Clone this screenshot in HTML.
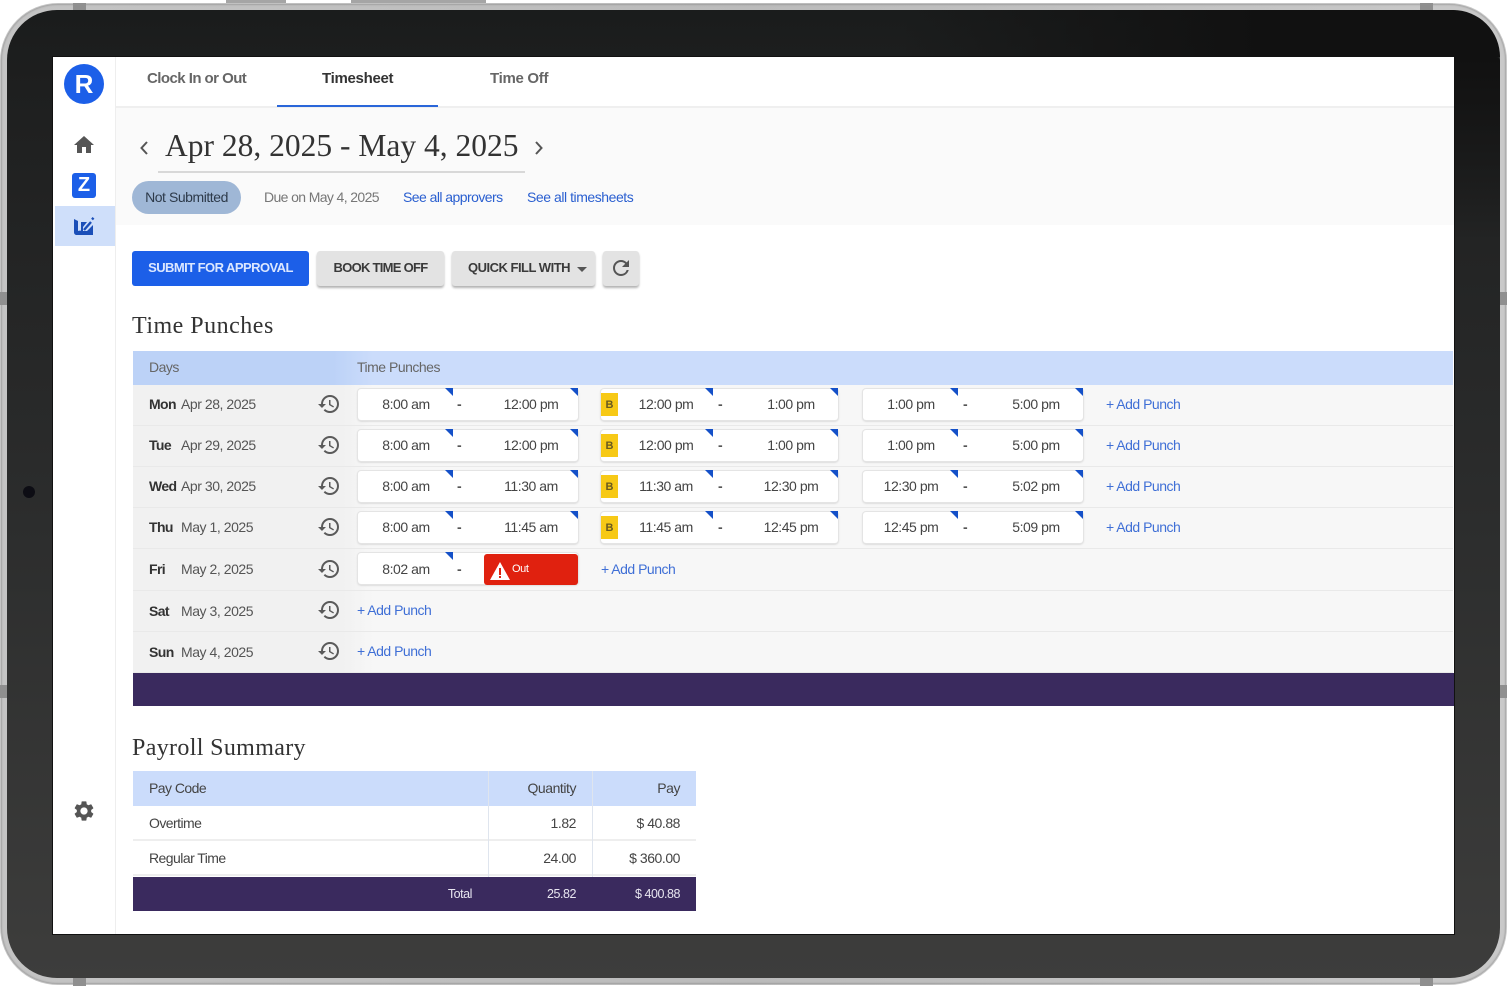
<!DOCTYPE html>
<html><head><meta charset="utf-8"><style>
html,body{margin:0;padding:0;background:#fff}
body{width:1507px;height:987px;position:relative;overflow:hidden;font-family:"Liberation Sans",sans-serif;font-size:14px;letter-spacing:-.42px;color:#444;filter:blur(.3px)}
div,span,a{position:absolute;white-space:nowrap}
svg{position:absolute}
.serif{font-family:"Liberation Serif",serif;letter-spacing:0;color:#333}
.tab{top:69px;font-size:15px;line-height:20px;color:#666;font-weight:bold;letter-spacing:-.55px}
.lnk{color:#2a5fd0;font-size:14px;line-height:18px;letter-spacing:-.5px}
.btn{top:251px;height:35px;line-height:34px;background:#e3e3e3;border-radius:3px;box-shadow:0 2px 2px rgba(0,0,0,.3);text-align:center;font-weight:bold;font-size:13px;letter-spacing:-.5px;color:#3a3a3a}
.row{left:133px;width:1320px;height:41px;background:linear-gradient(90deg,#f1f1f1 0,#f1f1f1 210px,#f7f7f7 240px,#f7f7f7 100%);border-bottom:1px solid #e9e9e9;box-sizing:border-box}
.day{left:16px;top:10px;font-weight:bold;color:#333;line-height:18px;letter-spacing:-.6px}
.dt{left:48px;top:10px;line-height:18px;color:#555;letter-spacing:-.45px}
.h{left:184px;top:7px;width:24px;height:24px;fill:#5a5a5a}
.cell{top:4px;height:31px;background:#fff;border-radius:3px;box-shadow:0 0 0 1px #e4e4e4,0 1px 2px #bbb}
.t{top:6px;width:100px;margin-left:-50px;text-align:center;line-height:18px;color:#444;letter-spacing:-.45px}
.d{top:6px;line-height:18px;color:#555;font-weight:bold}
.tri{top:-1px;width:0;height:0;border-top:8px solid #1450c8;border-left:8px solid transparent}
.b{top:4px;left:0;width:17px;height:23px;background:#f7c916;text-align:center;font-size:11px;line-height:24px;font-weight:bold;color:#6a5a20;letter-spacing:0}
.add{color:#3f6fd6;line-height:18px;top:10px;letter-spacing:-.5px}
.hd{color:#666;line-height:18px;letter-spacing:-.5px}
.pay{left:133px;width:563px;height:35px;background:#fff;border-bottom:2px solid #eee;box-sizing:border-box}
.pc{line-height:18px;color:#444;top:8px;letter-spacing:-.45px}
.r{text-align:right}
</style></head><body>
<svg width="0" height="0" style="position:absolute"><defs><symbol id="hist" viewBox="0 0 24 24"><path d="M13 3a9 9 0 0 0-9 9H1l3.89 3.89.07.14L9 12H6c0-3.87 3.13-7 7-7s7 3.13 7 7-3.13 7-7 7c-1.93 0-3.68-.79-4.94-2.06l-1.42 1.42A8.954 8.954 0 0 0 13 21a9 9 0 0 0 0-18zm-1 5v5l4.28 2.54.72-1.21-3.5-2.08V8H12z"/></symbol></defs></svg>

<div style="left:226px;top:0;width:60px;height:4px;background:#a5a5a5"></div>
<div style="left:351px;top:0;width:135px;height:4px;background:#a5a5a5"></div>
<div style="left:0;top:3px;width:1507px;height:982px;border-radius:58px;background:linear-gradient(90deg,#c4c4c4,#bbb 50%,#c9c9c9)"></div>
<div style="left:1px;top:4px;width:1505px;height:980px;border-radius:57px;box-shadow:inset 0 0 2px #777"></div>
<div style="left:7px;top:10px;width:1493px;height:968px;border-radius:50px;background:linear-gradient(180deg,#1a1c1c 0,#1e1f1f 8%,#2b2c2c 50%,#3d3d3c 100%)"></div>
<div style="left:900px;top:10px;width:600px;height:47px;border-radius:0 50px 0 0;background:linear-gradient(90deg,rgba(17,17,17,0) 0,#111 60%,#111 100%)"></div>
<div style="left:1454px;top:57px;width:46px;height:183px;border-radius:0 4px 0 0;background:linear-gradient(180deg,#111 0,rgba(17,17,17,0) 100%)"></div>
<div style="left:73px;top:3px;width:13px;height:7px;background:#8f8f8f"></div>
<div style="left:1420px;top:3px;width:13px;height:7px;background:#8f8f8f"></div>
<div style="left:73px;top:978px;width:13px;height:8px;background:#8f8f8f"></div>
<div style="left:1420px;top:978px;width:13px;height:8px;background:#8f8f8f"></div>
<div style="left:0;top:292px;width:7px;height:13px;background:#8f8f8f"></div>
<div style="left:1500px;top:292px;width:7px;height:13px;background:#8f8f8f"></div>
<div style="left:0;top:685px;width:7px;height:13px;background:#8f8f8f"></div>
<div style="left:1500px;top:685px;width:7px;height:13px;background:#8f8f8f"></div>
<div style="left:23px;top:486px;width:12px;height:12px;border-radius:50%;background:#0d0d14"></div>

<div id="screen" style="left:53px;top:57px;width:1401px;height:877px;background:#fff;overflow:hidden;box-shadow:0 0 0 1px #111"></div>

<div style="left:53px;top:57px;width:62px;height:877px;background:#fff;border-right:1px solid #eee"></div>
<div style="left:64px;top:64px;width:40px;height:40px;border-radius:50%;background:#1c5fe8;color:#fff;font-size:26px;font-weight:bold;line-height:41px;text-align:center;letter-spacing:0">R</div>
<svg style="left:72px;top:133px" width="24" height="24" viewBox="0 0 24 24" fill="#555"><path d="M10 20v-6h4v6h5v-8h3L12 3 2 12h3v8z"/></svg>
<div style="left:72px;top:173px;width:24px;height:25px;border-radius:3px;background:#1c5fe8;color:#fff;font-weight:bold;font-size:20px;line-height:25px;text-align:center;letter-spacing:0">Z</div>
<div style="left:55px;top:206px;width:60px;height:40px;background:#cfdffa"></div>
<svg style="left:73px;top:215px" width="23" height="22" viewBox="0 0 23 22"><path d="M1 4l4 2v10c1-.5 2-.5 3-.2V7h6l-4 5v4h4l6-6v10H4c-2 0-3-1-3-3z" fill="#1b4fb8"/><path d="M11 15l7-8" stroke="#1b4fb8" stroke-width="2.4" fill="none"/><path d="M19 4.5l1.5-1.7" stroke="#1b4fb8" stroke-width="2.4" fill="none"/></svg>
<svg style="left:72px;top:799px" width="24" height="24" viewBox="0 0 24 24" fill="#555"><path d="M19.14 12.94c.04-.3.06-.61.06-.94 0-.32-.02-.64-.07-.94l2.03-1.58a.49.49 0 0 0 .12-.61l-1.92-3.32a.488.488 0 0 0-.59-.22l-2.39.96c-.5-.38-1.03-.7-1.62-.94l-.36-2.54a.484.484 0 0 0-.48-.41h-3.84c-.24 0-.43.17-.47.41l-.36 2.54c-.59.24-1.13.57-1.62.94l-2.39-.96c-.22-.08-.47 0-.59.22L2.74 8.87c-.12.21-.08.47.12.61l2.03 1.58c-.05.3-.09.63-.09.94s.02.64.07.94l-2.03 1.58a.49.49 0 0 0-.12.61l1.92 3.32c.12.22.37.29.59.22l2.39-.96c.5.38 1.03.7 1.62.94l.36 2.54c.05.24.24.41.48.41h3.84c.24 0 .44-.17.47-.41l.36-2.54c.59-.24 1.13-.56 1.62-.94l2.39.96c.22.08.47 0 .59-.22l1.92-3.32c.12-.22.07-.47-.12-.61l-2.01-1.58zM12 15.6c-1.98 0-3.6-1.62-3.6-3.6s1.62-3.6 3.6-3.6 3.6 1.62 3.6 3.6-1.62 3.6-3.6 3.6z"/></svg>

<div style="left:116px;top:106px;width:1338px;height:2px;background:#efefef"></div>
<div class="tab" style="left:147px">Clock In or Out</div>
<div class="tab" style="left:322px;color:#333;letter-spacing:-.3px">Timesheet</div>
<div class="tab" style="left:490px;letter-spacing:-.3px">Time Off</div>
<div style="left:277px;top:105px;width:161px;height:2px;background:#2a66d9"></div>

<div style="left:116px;top:108px;width:1338px;height:117px;background:#fafafa"></div>
<svg style="left:138px;top:140px" width="12" height="16" viewBox="0 0 12 16" fill="none" stroke="#555" stroke-width="2"><path d="M9 2L3.5 8 9 14"/></svg>
<svg style="left:533px;top:140px" width="12" height="16" viewBox="0 0 12 16" fill="none" stroke="#555" stroke-width="2"><path d="M3 2l5.5 6L3 14"/></svg>
<div class="serif" style="left:165px;top:126px;font-size:31.5px;line-height:40px">Apr 28, 2025 - May 4, 2025</div>
<div style="left:158px;top:171px;width:367px;height:2px;background:#d8d8d8"></div>
<div style="left:132px;top:181px;width:109px;height:33px;border-radius:17px;background:#9fb7d6;text-align:center;line-height:33px;color:#2d3a4a;letter-spacing:-.45px">Not Submitted</div>
<div style="left:264px;top:188px;line-height:18px;color:#777;letter-spacing:-.62px">Due on May 4, 2025</div>
<div class="lnk" style="left:403px;top:188px;letter-spacing:-.55px">See all approvers</div>
<div class="lnk" style="left:527px;top:188px;letter-spacing:-.45px">See all timesheets</div>

<div class="btn" style="left:132px;width:177px;background:#1c5fe8;color:#dbe7ff;box-shadow:none;letter-spacing:-.55px">SUBMIT FOR APPROVAL</div>
<div class="btn" style="left:317px;width:127px;letter-spacing:-.72px">BOOK TIME OFF</div>
<div class="btn" style="left:452px;width:143px;text-align:left;text-indent:16px">QUICK FILL WITH</div>
<div style="left:577px;top:267px;width:0;height:0;border-left:5px solid transparent;border-right:5px solid transparent;border-top:5px solid #555"></div>
<div class="btn" style="left:603px;width:36px"></div>
<svg style="left:609px;top:256px" width="24" height="24" viewBox="0 0 24 24" fill="#555"><path d="M17.65 6.35A7.958 7.958 0 0 0 12 4c-4.42 0-7.99 3.58-7.99 8s3.57 8 7.99 8c3.73 0 6.84-2.55 7.73-6h-2.08A5.99 5.99 0 0 1 12 18c-3.31 0-6-2.69-6-6s2.69-6 6-6c1.66 0 3.14.69 4.22 1.78L13 11h7V4l-2.35 2.35z"/></svg>

<div class="serif" style="left:132px;top:311px;font-size:24px;line-height:30px;letter-spacing:.5px">Time Punches</div>
<div style="left:133px;top:351px;width:1320px;height:34px;background:linear-gradient(90deg,#bcd2f7 0,#bcd2f7 200px,#cbdcfb 240px,#cbdcfb 100%)"></div>
<div class="hd" style="left:149px;top:358px">Days</div>
<div class="hd" style="left:357px;top:358px">Time Punches</div>

<!-- Mon -->
<div class="row" style="top:385px"><div class="day">Mon</div><div class="dt">Apr 28, 2025</div><svg class="h"><use href="#hist"/></svg>
<div class="cell" style="left:225px;width:220px"><div class="t" style="left:48px">8:00 am</div><div class="d" style="left:99px">-</div><div class="t" style="left:173px">12:00 pm</div><div class="tri" style="left:87px"></div><div class="tri" style="left:212px"></div></div>
<div class="cell" style="left:468px;width:237px"><div class="b">B</div><div class="t" style="left:65px">12:00 pm</div><div class="d" style="left:117px">-</div><div class="t" style="left:190px">1:00 pm</div><div class="tri" style="left:104px"></div><div class="tri" style="left:229px"></div></div>
<div class="cell" style="left:730px;width:220px"><div class="t" style="left:48px">1:00 pm</div><div class="d" style="left:100px">-</div><div class="t" style="left:173px">5:00 pm</div><div class="tri" style="left:87px"></div><div class="tri" style="left:212px"></div></div>
<div class="add" style="left:973px">+ Add Punch</div></div>
<!-- Tue -->
<div class="row" style="top:426px"><div class="day">Tue</div><div class="dt">Apr 29, 2025</div><svg class="h"><use href="#hist"/></svg>
<div class="cell" style="left:225px;width:220px"><div class="t" style="left:48px">8:00 am</div><div class="d" style="left:99px">-</div><div class="t" style="left:173px">12:00 pm</div><div class="tri" style="left:87px"></div><div class="tri" style="left:212px"></div></div>
<div class="cell" style="left:468px;width:237px"><div class="b">B</div><div class="t" style="left:65px">12:00 pm</div><div class="d" style="left:117px">-</div><div class="t" style="left:190px">1:00 pm</div><div class="tri" style="left:104px"></div><div class="tri" style="left:229px"></div></div>
<div class="cell" style="left:730px;width:220px"><div class="t" style="left:48px">1:00 pm</div><div class="d" style="left:100px">-</div><div class="t" style="left:173px">5:00 pm</div><div class="tri" style="left:87px"></div><div class="tri" style="left:212px"></div></div>
<div class="add" style="left:973px">+ Add Punch</div></div>
<!-- Wed -->
<div class="row" style="top:467px"><div class="day">Wed</div><div class="dt">Apr 30, 2025</div><svg class="h"><use href="#hist"/></svg>
<div class="cell" style="left:225px;width:220px"><div class="t" style="left:48px">8:00 am</div><div class="d" style="left:99px">-</div><div class="t" style="left:173px">11:30 am</div><div class="tri" style="left:87px"></div><div class="tri" style="left:212px"></div></div>
<div class="cell" style="left:468px;width:237px"><div class="b">B</div><div class="t" style="left:65px">11:30 am</div><div class="d" style="left:117px">-</div><div class="t" style="left:190px">12:30 pm</div><div class="tri" style="left:104px"></div><div class="tri" style="left:229px"></div></div>
<div class="cell" style="left:730px;width:220px"><div class="t" style="left:48px">12:30 pm</div><div class="d" style="left:100px">-</div><div class="t" style="left:173px">5:02 pm</div><div class="tri" style="left:87px"></div><div class="tri" style="left:212px"></div></div>
<div class="add" style="left:973px">+ Add Punch</div></div>
<!-- Thu -->
<div class="row" style="top:508px"><div class="day">Thu</div><div class="dt">May 1, 2025</div><svg class="h"><use href="#hist"/></svg>
<div class="cell" style="left:225px;width:220px"><div class="t" style="left:48px">8:00 am</div><div class="d" style="left:99px">-</div><div class="t" style="left:173px">11:45 am</div><div class="tri" style="left:87px"></div><div class="tri" style="left:212px"></div></div>
<div class="cell" style="left:468px;width:237px"><div class="b">B</div><div class="t" style="left:65px">11:45 am</div><div class="d" style="left:117px">-</div><div class="t" style="left:190px">12:45 pm</div><div class="tri" style="left:104px"></div><div class="tri" style="left:229px"></div></div>
<div class="cell" style="left:730px;width:220px"><div class="t" style="left:48px">12:45 pm</div><div class="d" style="left:100px">-</div><div class="t" style="left:173px">5:09 pm</div><div class="tri" style="left:87px"></div><div class="tri" style="left:212px"></div></div>
<div class="add" style="left:973px">+ Add Punch</div></div>
<!-- Fri -->
<div class="row" style="top:549px;height:42px"><div class="day" style="top:11px">Fri</div><div class="dt" style="top:11px">May 2, 2025</div><svg class="h" style="top:8px"><use href="#hist"/></svg>
<div class="cell" style="left:225px;width:220px"><div class="t" style="left:48px;top:7px">8:02 am</div><div class="d" style="left:99px;top:7px">-</div><div class="tri" style="left:87px"></div>
<div style="left:126px;top:1px;width:94px;height:31px;background:#e0210f;border-radius:3px"><svg style="left:6px;top:8px" width="20" height="18" viewBox="0 0 20 18"><path d="M10 0l10 18H0z" fill="#fff"/><path d="M9 6h2v7H9zM9 14h2v2H9z" fill="#e0210f"/></svg><div style="left:28px;top:6px;font-size:11px;line-height:18px;color:#fff">Out</div></div></div>
<div class="add" style="left:468px;top:11px">+ Add Punch</div></div>
<!-- Sat -->
<div class="row" style="top:591px"><div class="day" style="top:11px">Sat</div><div class="dt" style="top:11px">May 3, 2025</div><svg class="h"><use href="#hist"/></svg><div class="add" style="left:224px">+ Add Punch</div></div>
<!-- Sun -->
<div class="row" style="top:632px"><div class="day" style="top:11px">Sun</div><div class="dt" style="top:11px">May 4, 2025</div><svg class="h"><use href="#hist"/></svg><div class="add" style="left:224px">+ Add Punch</div></div>
<div style="left:133px;top:673px;width:1321px;height:33px;background:#3a2a5e"></div>

<div class="serif" style="left:132px;top:733px;font-size:24px;line-height:30px;letter-spacing:.35px">Payroll Summary</div>
<div style="left:133px;top:771px;width:563px;height:35px;background:#cbdcfb"></div>
<div class="pc" style="left:149px;top:779px;letter-spacing:-.55px">Pay Code</div>
<div class="pc r" style="left:490px;width:86px;top:779px">Quantity</div>
<div class="pc r" style="left:600px;width:80px;top:779px">Pay</div>
<div class="pay" style="top:806px"></div>
<div class="pc" style="left:149px;top:814px;letter-spacing:-.55px">Overtime</div>
<div class="pc r" style="left:490px;width:86px;top:814px">1.82</div>
<div class="pc r" style="left:600px;width:80px;top:814px">$ 40.88</div>
<div class="pay" style="top:841px"></div>
<div class="pc" style="left:149px;top:849px;letter-spacing:-.55px">Regular Time</div>
<div class="pc r" style="left:490px;width:86px;top:849px">24.00</div>
<div class="pc r" style="left:600px;width:80px;top:849px">$ 360.00</div>
<div style="left:488px;top:771px;width:1px;height:106px;background:#dfe5ee"></div>
<div style="left:592px;top:771px;width:1px;height:106px;background:#dfe5ee"></div>
<div style="left:133px;top:877px;width:563px;height:34px;background:#3a2a5e"></div>
<div class="pc r" style="left:400px;width:72px;top:885px;color:#e8e6f0;font-size:12.5px">Total</div>
<div class="pc r" style="left:490px;width:86px;top:885px;color:#e8e6f0;font-size:12.5px">25.82</div>
<div class="pc r" style="left:600px;width:80px;top:885px;color:#e8e6f0;font-size:12.5px">$ 400.88</div>
</body></html>
